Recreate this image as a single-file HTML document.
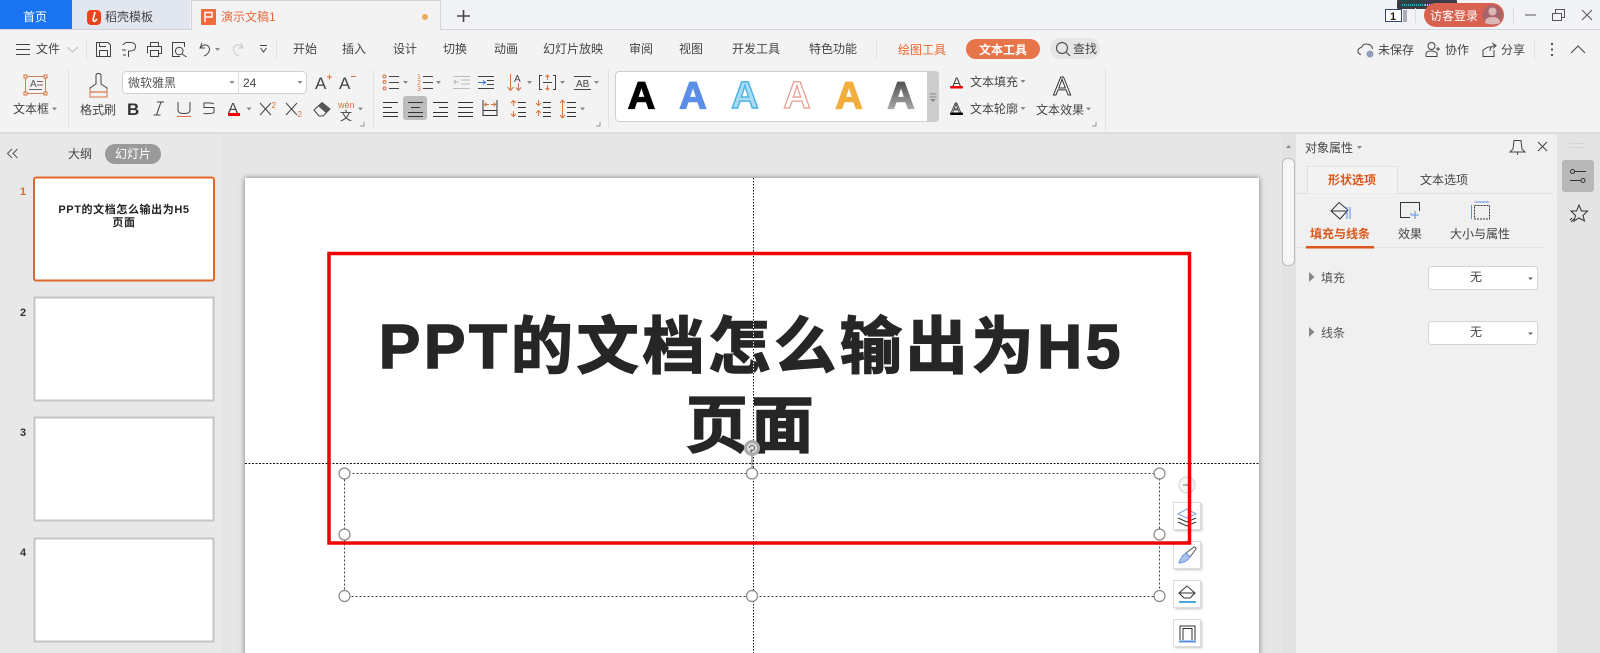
<!DOCTYPE html>
<html lang="zh"><head><meta charset="utf-8"><title>演示文稿1</title>
<style>
html,body{margin:0;padding:0;width:1600px;height:653px;overflow:hidden;background:#e6e6e6}
svg{display:block;font-family:"Liberation Sans","Noto Sans CJK SC",sans-serif}
text{font-size:12px;fill:#444}
.k{fill:none;stroke:#444;stroke-width:1}
.o{fill:none;stroke:#d8743c;stroke-width:1}
.tri{fill:#888}
.sep{stroke:#e2e2e2;stroke-width:1}
.cn{font-family:"Noto Sans CJK SC",sans-serif}
</style></head><body>
<svg width="1600" height="653" viewBox="0 0 1600 653" xmlns="http://www.w3.org/2000/svg">
<defs>
<filter id="sh" x="-5%" y="-5%" width="110%" height="110%"><feGaussianBlur stdDeviation="3"/></filter>
<filter id="s1" x="-30%" y="-30%" width="160%" height="160%"><feGaussianBlur stdDeviation="1.2"/></filter>
<linearGradient id="gr" x1="0" y1="0" x2="0" y2="1"><stop offset="0" stop-color="#3c3c3c"/><stop offset="1" stop-color="#c4c4c4"/></linearGradient>
</defs>

<!-- title bar -->
<rect width="1600" height="29" fill="#f2f3f7"/>
<rect y="29" width="1600" height="1" fill="#d2d5de"/>
<rect width="72" height="29" fill="#1a74f2"/>
<text x="23" y="21" style="fill:#fff">首页</text>
<rect x="72" width="118" height="29" fill="#e2e6ef"/>
<rect x="87" y="10" width="14" height="15" rx="4" fill="#f0421c"/>
<path d="M95 12 L93 20 Q94 23 97 19" fill="none" stroke="#fff" stroke-width="1.6"/>
<text x="105" y="21">稻壳模板</text>
<rect x="191.5" y="0.5" width="249" height="30" fill="#f3f3f3" stroke="#d2d5de"/>
<rect x="201" y="9" width="15" height="16" rx="1" fill="#f26b3a"/>
<path d="M205 22 V12.5 H212 V17 H205" fill="none" stroke="#fff" stroke-width="1.4"/>
<text x="221" y="21" style="fill:#e8693a">演示文稿1</text>
<circle cx="425" cy="17" r="3" fill="#f0a860"/>
<path d="M463.500 10 V22 M457 16 H470" stroke="#444" stroke-width="1.600" fill="none"/>

<rect x="1385.500" y="9.500" width="16" height="12" fill="#fff" stroke="#33476b"/>
<text x="1390" y="20" style="font-size:11px;font-weight:bold;fill:#222">1</text>
<path d="M1404 10 V22 M1406 10 V22" stroke="#667" fill="none"/>
<rect x="1397" y="0" width="60" height="9" rx="1" fill="#3a3d44"/>
<path d="M1402 5 H1425" stroke="#37a6d8" stroke-width="2" stroke-dasharray="1 1"/>
<path d="M1425 5 H1443" stroke="#e6c93a" stroke-width="2" stroke-dasharray="1 1"/>
<path class="sep" d="M1415.500 8 V23 M1513.500 8 V23" style="stroke:#d8d8de"/>
<rect x="1424" y="3" width="80" height="24" rx="12" fill="#d9614f"/>
<text x="1430" y="20" style="fill:#fff">访客登录</text>
<circle cx="1492.500" cy="15" r="10" fill="#a8646a"/>
<circle cx="1492.500" cy="11.500" r="4" fill="#dcb8b4"/>
<path d="M1485 23 Q1485 17 1492.500 17 Q1500 17 1500 23 Q1492.500 26 1485 23 Z" fill="#dcb8b4"/>
<path d="M1525 15 H1536" stroke="#555" fill="none"/>
<path d="M1552.500 13.500 H1561.500 V20.500 H1552.500 Z M1555.500 13 V9.500 H1564.500 V17.500 H1562" stroke="#555" fill="none"/>
<path d="M1582 10 L1592 20 M1592 10 L1582 20" stroke="#555" fill="none"/>

<!-- ribbon -->
<rect y="30" width="1600" height="102" fill="#f3f3f3"/>
<rect y="132" width="1600" height="2" fill="#dcdcdc"/>

<!-- row 1 -->
<path class="k" d="M16 44.500 H30 M16 49.500 H30 M16 54.500 H30"/>
<text x="36" y="53">文件</text>
<path d="M67 47 L72.500 52 L78 47" fill="none" stroke="#bbb"/>
<path class="sep" d="M86.500 40 V60 M276.500 40 V60 M876.500 40 V60 M1534.500 40 V60"/>
<path class="k" d="M96.500 42.500 H108 L110.500 45 V56.500 H96.500 Z M99.500 56 V50.500 H107.500 V56 M99.500 43 V46.500 H106"/>
<path class="k" d="M123 45 Q125 42 129 42.500 H131 Q136 43 135.500 47 Q135 51 130 51 H128.500 V57 M122 50 H126 M123 55 H126"/>
<path class="k" d="M150.500 46 V42.500 H158.500 V46 M147.500 53.500 V46.500 H161.500 V53.500 H158 M150.500 50.500 H158.500 V56.500 H150.500 Z"/>
<path class="k" d="M184.500 47 V42.500 H172.500 V56.500 H180 M183 51 a3.800 3.800 0 1 1 -7.600 0 a3.800 3.800 0 1 1 7.600 0 M182 54 L186.500 57"/>
<path class="k" d="M202 43 L200 48 L205 48 M200.500 47.500 Q204 43.500 207.500 45.500 Q211 48.500 208.500 52.500 Q207 55 204 56"/>
<path class="tri" d="M215 48 h5 l-2.500 3z"/>
<path d="M241 43 L243 48 L238 48 M242.500 47.500 Q239 43.500 235.500 45.500 Q232 48.500 234.500 52.500 Q236 55 239 56" fill="none" stroke="#c8c8c8"/>
<path class="k" d="M260 45.500 H267 M260.500 48 L263.500 52 L266.500 48" />
<g>
<text x="293" y="53">开始</text><text x="342" y="53">插入</text><text x="393" y="53">设计</text><text x="443" y="53">切换</text><text x="494" y="53">动画</text><text x="543" y="53">幻灯片放映</text><text x="629" y="53">审阅</text><text x="679" y="53">视图</text><text x="732" y="53">开发工具</text><text x="809" y="53">特色功能</text>
<text x="898" y="54" style="fill:#f0652c">绘图工具</text>
</g>
<rect x="966" y="39" width="74" height="20" rx="10" fill="#e8744a"/>
<text x="979" y="54" style="fill:#fff;font-weight:bold">文本工具</text>
<rect x="1050" y="38" width="50" height="21" rx="10" fill="#e6e6e6"/>
<circle cx="1062" cy="48" r="5.500" fill="none" stroke="#555" stroke-width="1.200"/>
<path d="M1066 52 L1070 56" stroke="#555" stroke-width="1.200"/>
<text x="1073" y="53">查找</text>

<path class="k" d="M1361 54.500 Q1358 54 1358 51 Q1358 48 1361.500 47.500 Q1363 43.500 1367 44 Q1372 44.500 1372.500 49"/>
<circle cx="1370" cy="54" r="3.500" fill="#8fa0b4"/>
<text x="1378" y="54">未保存</text>
<circle cx="1431.500" cy="46" r="3.500" class="k"/>
<path class="k" d="M1426 56.500 V54 Q1426 51 1431 51 Q1435 51 1437 53 V56.500 H1426 M1436 49 H1440 M1438 47 V51"/>
<text x="1445" y="54">协作</text>
<path class="k" d="M1494 50 V56.500 H1483 V50 L1488 47 H1491 M1490 51 Q1490 46 1495 45.500 M1492 43 L1496 45.500 L1493 48.500"/>
<text x="1501" y="54">分享</text>
<circle cx="1552" cy="44" r="1.100" fill="#444"/><circle cx="1552" cy="49.500" r="1.100" fill="#444"/><circle cx="1552" cy="55" r="1.100" fill="#444"/>
<path class="k" d="M1571 53 L1578 46 L1585 53"/>

<!-- ribbon group 1 -->
<rect x="25.500" y="76.500" width="20" height="17" fill="none" stroke="#c9835e"/>
<g fill="#f3f3f3" stroke="#d8743c"><rect x="24" y="75" width="3" height="3"/><rect x="44" y="75" width="3" height="3"/><rect x="24" y="92" width="3" height="3"/><rect x="44" y="92" width="3" height="3"/></g>
<text x="30" y="87" style="font-size:10px;fill:#555">A</text>
<path d="M37 81.500 H43 M37 85 H43 M29 89.500 H42" stroke="#666" fill="none"/>
<text x="13" y="113">文本框</text>
<path class="tri" d="M52 107.500 h5 l-2.500 3z"/>
<path class="sep" d="M68.500 70 V128 M373.500 70 V128 M608.500 70 V128 M1105.500 68 V130"/>

<!-- brush -->
<path class="k" d="M96 84 V75.500 Q96 73.500 98.500 73.500 Q101 73.500 101 75.500 V84 L107 88 V97 H90 V88 Z"/>
<path d="M90.500 92 H106.500" stroke="#d8743c" stroke-width="1.200"/>
<path class="o" d="M90 89 V97 H107 V89"/>
<text x="80" y="114">格式刷</text>

<rect x="122.500" y="71.500" width="184" height="22" rx="4" fill="#fff" stroke="#d0d0d0"/>
<path d="M238.500 72 V93" stroke="#ddd"/>
<text x="128" y="87" style="fill:#555">微软雅黑</text>
<path class="tri" d="M229.500 81 h5 l-2.500 3z"/>
<text x="243" y="87" style="fill:#444;font-size:12px">24</text>
<path class="tri" d="M297.500 81 h5 l-2.500 3z"/>
<text x="315" y="89" style="font-size:17px;fill:#444">A</text><path d="M327 77 H332 M329.500 74.500 V79.500" stroke="#d8743c" fill="none"/>
<text x="339" y="89" style="font-size:17px;fill:#444">A</text><path d="M351 76.500 H356" stroke="#d8743c" fill="none"/>

<text x="127" y="115" style="font-size:17px;font-weight:bold;fill:#333">B</text>
<path class="k" d="M161 102 L156.500 115 M157 102 H164 M153.500 115 H160.500" style="stroke-width:1.100"/>
<path class="k" d="M178 102 V110 Q178 113.500 184 113.500 Q190 113.500 190 110 V102"/>
<path class="o" d="M177 116.500 H191"/>
<path class="k" d="M214 104 Q212 102.500 204 103 V107.500 H214 V112.500 Q212 114 203.500 113.500"/>
<text x="228" y="113" style="font-size:15px;fill:#444">A</text>
<rect x="228" y="113" width="12" height="3" fill="#f00000"/>
<path class="tri" d="M246.500 107.500 h5 l-2.500 3z"/>
<path d="M260 103 L271 115 M271 103 L260 115" class="k"/>
<text x="271.500" y="108" style="font-size:8px;fill:#d8743c">2</text>
<path d="M286 103 L297 115 M297 103 L286 115" class="k"/>
<text x="297.500" y="117" style="font-size:8px;fill:#d8743c">2</text>
<path class="k" d="M314 110 L322 102.500 L330 109 L323 116 H319 Z"/>
<path d="M318 106 L322 102.500 L330 109 L326 113 Z" fill="#555"/>
<text x="338" y="108" style="font-size:9px;fill:#d8743c">wén</text>
<text x="340" y="120" style="font-size:12px;fill:#444">文</text>
<path class="tri" d="M358 107.500 h5 l-2.500 3z"/>
<path d="M364 122 V126 H360" stroke="#999" fill="none"/>

<!-- paragraph row 1 -->
<g class="o"><circle cx="384.500" cy="76.500" r="1.500"/><circle cx="384.500" cy="82" r="1.500"/><circle cx="384.500" cy="88.500" r="1.500"/></g>
<path class="k" d="M389 76.500 H399 M389 82.500 H399 M389 88.500 H399"/>
<path class="tri" d="M403 81 h5 l-2.500 3z"/>
<text x="417" y="79" style="font-size:7px;fill:#d8743c">1</text><text x="417" y="85" style="font-size:7px;fill:#d8743c">2</text><text x="417" y="91" style="font-size:7px;fill:#d8743c">3</text>
<path class="k" d="M423 76.500 H433 M423 82.500 H433 M423 88.500 H433"/>
<path class="tri" d="M436 81 h5 l-2.500 3z"/>
<path d="M453 76.500 H470 M461 80 H470 M461 84 H470 M453 88.500 H470 M459 82 H454 M456 80 L454 82 L456 84" stroke="#bbb" fill="none"/>
<path class="k" d="M478 76.500 H494 M487 80.500 H494 M487 84.500 H494 M478 88.500 H494"/>
<path d="M478 82.500 H485 M483 80.500 L485.500 82.500 L483 84.500" stroke="#3a7ae8" fill="none"/>
<path class="o" d="M510.500 74 V90 M507.500 87 L510.500 90.500 L513.500 87 M518.500 83 V90 M516 87.500 L518.500 90.500 L521 87.500"/>
<text x="514" y="82" style="font-size:10px;fill:#444">A</text>
<path class="tri" d="M527 81 h5 l-2.500 3z"/>
<path class="k" d="M542 75.500 H539.500 V89.500 H542 M553 75.500 H555.500 V89.500 H553 M543 82.500 H552"/>
<path class="o" d="M547.500 75 V80 M545.500 77 L547.500 75 L549.500 77 M547.500 85 V90 M545.500 88 L547.500 90 L549.500 88"/>
<path class="tri" d="M560 81 h5 l-2.500 3z"/>
<path class="k" d="M574 76.500 H591 M574 89.500 H591"/>
<text x="576" y="87" style="font-size:10px;fill:#444">AB</text>
<path class="tri" d="M594 81 h5 l-2.500 3z"/>

<!-- paragraph row 2 -->
<rect x="403" y="96" width="24" height="24" rx="3" fill="#bdbdbd"/>
<path class="k" d="M383 102.500 H398 M383 107.500 H392 M383 112.500 H398 M383 116.500 H398" style="stroke:#333"/>
<path class="k" d="M408 102.500 H423 M411 107.500 H420 M408 112.500 H423 M408 116.500 H423" style="stroke:#333"/>
<path class="k" d="M433 102.500 H448 M439 107.500 H448 M433 112.500 H448 M433 116.500 H448" style="stroke:#333"/>
<path class="k" d="M458 102.500 H473 M458 107.500 H473 M458 112.500 H473 M458 116.500 H473" style="stroke:#333"/>
<path class="k" d="M483 100 V116 M497 100 V116 M483 110.500 H497 M483 115.500 H497" style="stroke:#333"/>
<path class="o" d="M485 104.500 H489 M486.500 102.500 L484.500 104.500 L486.500 106.500 M491 104.500 H495 M493.500 102.500 L495.500 104.500 L493.500 106.500"/>
<path class="o" d="M513.500 101 V106 M511 103 L513.500 100.500 L516 103 M513.500 111 V116 M511 114 L513.500 116.500 L516 114"/>
<path class="k" d="M518 102.500 H526 M518 107.500 H526 M518 112.500 H526 M518 116.500 H526" style="stroke:#333"/>
<path class="o" d="M538.500 100 V105 M536 103 L538.500 105.500 L541 103 M538.500 111 V116 M536 113 L538.500 110.500 L541 113"/>
<path class="k" d="M543 102.500 H551 M543 107.500 H551 M543 112.500 H551 M543 116.500 H551" style="stroke:#333"/>
<path class="o" d="M562.500 100 V118 M560 103 L562.500 100 L565 103 M560 115 L562.500 118 L565 115"/>
<path class="k" d="M567 102.500 H576 M567 107.500 H576 M567 112.500 H576 M567 116.500 H576" style="stroke:#333"/>
<path class="tri" d="M580 107.500 h5 l-2.500 3z"/>
<path d="M600 122 V126 H596" stroke="#999" fill="none"/>

<!-- wordart -->
<rect x="615.500" y="71.500" width="323" height="50" rx="4" fill="#fff" stroke="#cfcfcf"/>
<path d="M927 71 H935 Q939 71 939 75 V118 Q939 122 935 122 H927 Z" fill="#cdcdcd"/>
<path d="M932 94 h7 M932 97 h7" stroke="#888" transform="translate(-2.500 0)"/>
<path class="tri" d="M930 99 h6 l-3 3z"/>
<g style="font-family:'Liberation Sans',sans-serif;font-weight:bold">
<text x="641.500" y="108.500" text-anchor="middle" style="font-size:38px;fill:#000;stroke:#000;stroke-width:1.300;font-weight:bold">A</text>
<text x="693" y="108.500" text-anchor="middle" style="font-size:38px;fill:#5b8ee6;stroke:#5b8ee6;stroke-width:1.300;font-weight:bold">A</text>
<text x="745" y="108" text-anchor="middle" style="font-size:38px;fill:#a8dcf5;stroke:#4fb3e4;stroke-width:1.500;font-weight:bold">A</text>
<text x="797" y="108" text-anchor="middle" style="font-size:38px;fill:#fff;stroke:#e89a8c;stroke-width:1.200;font-weight:bold">A</text>
<text x="849" y="108.500" text-anchor="middle" style="font-size:38px;fill:#f2ae3d;stroke:#f2ae3d;stroke-width:1.300;font-weight:bold">A</text>
<text x="901" y="108.500" text-anchor="middle" style="font-size:38px;fill:url(#gr);stroke:url(#gr);stroke-width:1.300;font-weight:bold">A</text>
</g>
<text x="952" y="87" style="font-size:14px;fill:#444">A</text>
<rect x="950" y="86" width="13" height="2.500" rx="1" fill="#f00000"/>
<text x="970" y="86">文本填充</text>
<path class="tri" d="M1020.500 80 h5 l-2.500 3z"/>
<text x="951" y="113" style="font-size:15px;fill:#fff;stroke:#333;stroke-width:.8">A</text>
<rect x="950" y="112.500" width="13" height="2.500" rx="1" fill="#000"/>
<text x="970" y="113">文本轮廓</text>
<path class="tri" d="M1020.500 107 h5 l-2.500 3z"/>
<text x="1062" y="95" text-anchor="middle" style="font-size:26px;fill:#fff;stroke:#333;stroke-width:1">A</text>
<text x="1036" y="114">文本效果</text>
<path class="tri" d="M1086 107.500 h5 l-2.500 3z"/>
<path d="M1096 122 V126 H1092" stroke="#999" fill="none"/>

<!-- left panel -->
<rect y="134" width="222" height="519" fill="#e8e8e8"/>
<rect x="222" y="134" width="1" height="519" fill="#dedede"/>
<path d="M12 149 L7.500 153.500 L12 158 M17.500 149 L13 153.500 L17.500 158" fill="none" stroke="#555"/>
<text x="68" y="158">大纲</text>
<rect x="105" y="144" width="56" height="20" rx="10" fill="#9a9a9a"/>
<text x="115" y="158" style="fill:#fff">幻灯片</text>

<text x="20" y="195" style="font-size:11px;font-weight:bold;fill:#e0682b">1</text>
<rect x="34" y="177.500" width="180" height="103" rx="2" fill="#fff" stroke="#e0682b" stroke-width="2"/>
<text x="124" y="213" text-anchor="middle" style="font-size:11px;font-weight:bold;fill:#222;letter-spacing:.6px">PPT的文档怎么输出为H5</text>
<text x="124" y="226" text-anchor="middle" style="font-size:11px;font-weight:bold;fill:#222;letter-spacing:.6px">页面</text>
<text x="20" y="316" style="font-size:11px;font-weight:bold;fill:#333">2</text>
<rect x="34.500" y="297.500" width="179" height="103" fill="#fff" stroke="#c4c4c4" stroke-width="2"/>
<text x="20" y="436" style="font-size:11px;font-weight:bold;fill:#333">3</text>
<rect x="34.500" y="417.500" width="179" height="103" fill="#fff" stroke="#c4c4c4" stroke-width="2"/>
<text x="20" y="556" style="font-size:11px;font-weight:bold;fill:#333">4</text>
<rect x="34.500" y="538.500" width="179" height="103" fill="#fff" stroke="#c4c4c4" stroke-width="2"/>

<!-- slide -->
<rect x="245" y="178" width="1014" height="490" fill="#777" filter="url(#sh)"/>
<rect x="245" y="178" width="1014" height="480" fill="#fff"/>
<text x="751.500" y="368" text-anchor="middle" style="font-size:62px;font-weight:bold;fill:#262626;stroke:#262626;stroke-width:1.600;letter-spacing:3.800px">PPT的文档怎么输出为H5</text>
<text x="751.500" y="447" text-anchor="middle" style="font-size:62px;font-weight:bold;fill:#262626;stroke:#262626;stroke-width:1.600;letter-spacing:3.800px">页面</text>
<path d="M753.500 178 V653" stroke="#fff" fill="none"/>
<path d="M753.500 178 V653" stroke="#111" stroke-dasharray="1.500 1.500" fill="none"/>
<path d="M245 463.500 H1259" stroke="#fff" fill="none"/>
<path d="M245 463.500 H1259" stroke="#111" stroke-dasharray="2 1.500" fill="none"/>
<rect x="344.500" y="473.500" width="815" height="123" fill="none" stroke="#444" stroke-dasharray="2 2"/>
<g fill="#fff" stroke="#888" stroke-width="1.200">
<circle cx="344.500" cy="473.500" r="5.500"/><circle cx="752" cy="473.500" r="5.500"/><circle cx="1159.500" cy="473.500" r="5.500"/>
<circle cx="344.500" cy="534.500" r="5.500"/><circle cx="1159.500" cy="534.500" r="5.500"/>
<circle cx="344.500" cy="596" r="5.500"/><circle cx="752" cy="596" r="5.500"/><circle cx="1159.500" cy="596" r="5.500"/>
</g>
<path d="M752 455 V468" stroke="#666"/>
<circle cx="752" cy="448" r="6.500" fill="#ddd" stroke="#aaa" stroke-width="3"/>
<path d="M749.500 448 a2.500 2.500 0 1 1 2.500 2.500 M752 449.500 L750.500 451 L752 452.500" fill="none" stroke="#555" stroke-width="1"/>
<!-- floating tools -->
<circle cx="1187" cy="485" r="8" fill="#f6f6f6" stroke="#d8d8d8" stroke-width="1.200"/>
<path d="M1183 485 H1191" stroke="#999" stroke-width="1.500"/>
<g fill="#999" filter="url(#s1)" opacity=".6"><rect x="1175" y="504" width="27" height="27"/><rect x="1175" y="543" width="27" height="27"/><rect x="1175" y="582" width="27" height="27"/><rect x="1175" y="621" width="27" height="27"/></g>
<g fill="#fff" stroke="#dcdcdc"><rect x="1173.500" y="502.500" width="27" height="27"/><rect x="1173.500" y="541.500" width="27" height="27"/><rect x="1173.500" y="580.500" width="27" height="27"/><rect x="1173.500" y="619.500" width="27" height="27"/></g>
<path d="M1178 514 L1187 518 L1196 514 L1187 509 Z" fill="none" stroke="#7a9fe0"/>
<path class="k" d="M1178 518 L1187 522 L1196 518 M1178 522 L1187 526 L1196 522" style="stroke:#333"/>
<path d="M1186 553 L1194 547 Q1196 547 1196 549 L1190 557 Z" fill="none" stroke="#555"/>
<path d="M1186 553 L1190 557 Q1186 563 1179 563 Q1181 556 1186 553 Z" fill="#a8c2ee" stroke="#6a92dc"/>
<path class="k" d="M1179 593 L1187 586 L1195 593 L1190 598 H1184 Z M1179 593 H1195" style="stroke:#333"/>
<path d="M1179 602 H1196" stroke="#4fa8e0" stroke-width="2"/>
<path class="k" d="M1180 640 V626 H1195 V640 M1183 640 V628.500 H1192 V640" style="stroke:#333"/>
<path d="M1179 641.500 H1196" stroke="#5a8fe0" stroke-width="2"/>
<!-- annotation: red frame above everything on the slide -->
<rect x="329" y="253.500" width="860.500" height="289.500" fill="none" stroke="#f00000" stroke-width="3.500"/>

<!-- scrollbar -->
<rect x="1270" y="134" width="12" height="519" fill="#e6e6e6"/>
<rect x="1282" y="134" width="14" height="519" fill="#e2e2e2"/>
<path d="M1286 148 h5 l-2.500 -3z" fill="#888"/>
<rect x="1282.500" y="158.500" width="12" height="107" rx="5" fill="#f6f6f6" stroke="#bcbcbc"/>

<!-- right panel -->
<rect x="1296" y="134" width="261" height="519" fill="#f0f0f0"/>
<rect x="1557" y="134" width="43" height="519" fill="#e4e4e4"/>
<text x="1305" y="152">对象属性</text>
<path class="tri" d="M1357 146 h5 l-2.500 3z"/>
<path class="k" d="M1514 140.500 H1521 L1522 149 L1525 152 H1510 L1513 149 Z M1517.500 152 V155" style="stroke:#444"/>
<path class="k" d="M1538 142 L1547 151 M1547 142 L1538 151"/>
<path d="M1296 193.500 H1553" stroke="#e0e0e0"/>
<path d="M1307.500 193.500 V166.500 H1397.500 V193.500" fill="#f3f3f3" stroke="#e0e0e0"/>
<text x="1328" y="184" style="fill:#d9581a;font-weight:bold">形状选项</text>
<text x="1420" y="184">文本选项</text>
<path class="k" d="M1331 211 L1339 202.500 L1348 210 L1340 219 Z M1331 211 H1348" style="stroke:#333"/>
<path d="M1347 207 V219 M1350 207 V219" stroke="#5a8fe0" fill="none"/>
<path d="M1402 217.500 H1400.500 V202.500 H1419.500 V211 M1400.500 217.500 H1410" fill="none" stroke="#333"/>
<path d="M1415 211 V219 M1411 215 H1419 M1411 213 v2" fill="none" stroke="#5a8fe0"/>
<path d="M1474.500 202 H1489 M1471.500 205 V219" stroke="#5a8fe0" fill="none"/>
<rect x="1474.500" y="205.500" width="15" height="13.500" fill="none" stroke="#333" stroke-dasharray="2 1"/>
<text x="1310" y="238" style="fill:#d9581a;font-weight:bold">填充与线条</text>
<text x="1398" y="238">效果</text>
<text x="1450" y="238">大小与属性</text>
<path d="M1296 247.500 H1545" stroke="#e2e2e2"/>
<rect x="1306" y="246" width="68" height="2.500" fill="#d9581a"/>
<path d="M1309 272 L1314.500 277 L1309 282 Z" fill="#888"/>
<text x="1321" y="282" style="fill:#555">填充</text>
<rect x="1428.500" y="266.500" width="109" height="23" rx="3" fill="#fff" stroke="#d4d4d4"/>
<text x="1470" y="281">无</text>
<path d="M1528 277.500 h5 l-2.500 2.500z" fill="#666"/>
<path d="M1309 327 L1314.500 332 L1309 337 Z" fill="#888"/>
<text x="1321" y="337" style="fill:#555">线条</text>
<rect x="1428.500" y="321.500" width="109" height="23" rx="3" fill="#fff" stroke="#d4d4d4"/>
<text x="1470" y="336">无</text>
<path d="M1528 332.500 h5 l-2.500 2.500z" fill="#666"/>

<!-- side strip -->
<path d="M1569 143.500 H1585 M1569 147.500 H1585" stroke="#d4d4d4" fill="none"/>
<rect x="1562" y="160" width="32" height="32" rx="3" fill="#b8b8b8"/>
<circle cx="1572.500" cy="171.500" r="2" fill="none" stroke="#333"/>
<path d="M1574.500 171.500 H1586 M1570 180.500 H1581" stroke="#333" fill="none"/>
<circle cx="1583" cy="180.500" r="2" fill="none" stroke="#333"/>
<path class="k" d="M1579 205 L1581.500 211 L1587.500 211 L1583 215.500 L1584.500 221 L1579 218 L1574 221 L1575.500 215.500 L1571 211 L1576.500 211 Z" style="stroke:#333"/>
<path d="M1571 222 L1574 219 M1572 218 L1570 220" stroke="#333" fill="none"/>
</svg>
</body></html>
